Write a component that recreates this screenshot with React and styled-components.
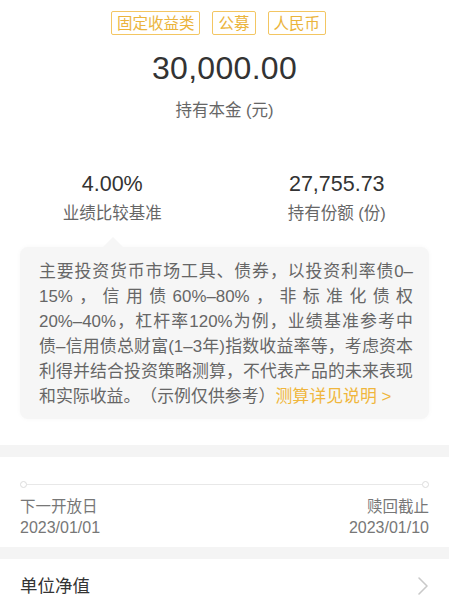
import React from "react";
import styled, { createGlobalStyle } from "styled-components";

const Global = createGlobalStyle`
  html, body { margin: 0; padding: 0; background: #fff; }
  body {
    font-family: "Liberation Sans", "Noto Sans CJK SC", sans-serif;
    -webkit-font-smoothing: antialiased;
    text-spacing-trim: space-all;
  }
`;

const Page = styled.div`
  width: 449px;
  background: #fff;
  display: flex;
  flex-direction: column;
`;

const Summary = styled.section`
  display: flex;
  flex-direction: column;
  align-items: center;
  padding-top: 11px;
`;

const TagRow = styled.div`
  display: flex;
  gap: 12px;
  padding-right: 12px;
`;

const Tag = styled.span`
  box-sizing: border-box;
  height: 24px;
  padding: 0 5px;
  border: 1.5px solid #f3c662;
  border-radius: 2px;
  color: #ebb43c;
  font-size: 15.5px;
  line-height: 21px;
  display: flex;
  align-items: center;
`;

const Amount = styled.div`
  margin-top: 13px;
  font-size: 32px;
  line-height: 40px;
  color: #333;
  letter-spacing: 0.3px;
`;

const Caption = styled.div`
  margin-top: ${(p) => p.$mt || 0}px;
  font-size: 16.5px;
  line-height: 24px;
  color: #666;
`;

const Stats = styled.div`
  margin-top: 48px;
  display: grid;
  grid-template-columns: 1fr 1fr;
`;

const Stat = styled.div`
  display: flex;
  flex-direction: column;
  align-items: center;
  gap: 3px;
`;

const StatValue = styled.div`
  font-size: 21.5px;
  line-height: 28px;
  color: #333;
`;

const BubbleWrap = styled.div`
  padding: 22px 20px 26px 20px;
`;

const Bubble = styled.div`
  position: relative;
  background: #f6f6f6;
  border-radius: 8px;
  padding: 12px 16px 10px 19px;
  box-shadow: 0 0 5px rgba(0, 0, 0, 0.03);
  &::before {
    content: "";
    position: absolute;
    top: -10px;
    left: 83px;
    border-left: 10px solid transparent;
    border-right: 10px solid transparent;
    border-bottom: 10px solid #f6f6f6;
  }
`;

const Line = styled.div`
  font-size: 16.9px;
  line-height: 25px;
  color: #666;
  text-align: justify;
  text-align-last: ${(p) => (p.$last ? "left" : "justify")};
  white-space: nowrap;
  text-spacing-trim: space-all;
`;

const Link = styled.span`
  color: #f0b63d;
`;

const Band = styled.div`
  height: 12px;
  background: #f4f4f4;
`;

const Timeline = styled.section`
  padding: 24px 20px 9px 20px;
  display: flex;
  flex-direction: column;
`;

const Track = styled.div`
  display: flex;
  align-items: center;
  height: 7px;
  margin-bottom: 9px;
`;

const Dot = styled.span`
  box-sizing: border-box;
  width: 7px;
  height: 7px;
  border-radius: 50%;
  border: 1px solid #dcdcdc;
  background: #fff;
  flex: none;
`;

const TrackLine = styled.span`
  flex: 1;
  height: 1px;
  background: #e8e8e8;
`;

const Ends = styled.div`
  display: flex;
  justify-content: space-between;
`;

const End = styled.div`
  display: flex;
  flex-direction: column;
  align-items: ${(p) => (p.$right ? "flex-end" : "flex-start")};
`;

const EndLabel = styled.div`
  font-size: 15.5px;
  line-height: 20px;
  color: #777;
`;

const EndDate = styled.div`
  font-size: 16px;
  line-height: 21px;
  color: #777;
`;

const Row = styled.div`
  height: 54px;
  padding: 0 20px;
  display: flex;
  align-items: center;
  justify-content: space-between;
`;

const RowTitle = styled.div`
  font-size: 17.5px;
  color: #333;
  margin-top: -4px;
`;

const Chevron = () => (
  <svg width="12" height="20" viewBox="0 0 12 20" fill="none">
    <path d="M2 2 L10 10 L2 18" stroke="#c9c9c9" strokeWidth="1.6" strokeLinecap="round" strokeLinejoin="round" />
  </svg>
);

export default function App() {
  return (
    <Page>
      <Global />
      <Summary>
        <TagRow>
          <Tag>固定收益类</Tag>
          <Tag>公募</Tag>
          <Tag>人民币</Tag>
        </TagRow>
        <Amount>30,000.00</Amount>
        <Caption $mt={10}>持有本金 (元)</Caption>
      </Summary>
      <Stats>
        <Stat>
          <StatValue>4.00%</StatValue>
          <Caption>业绩比较基准</Caption>
        </Stat>
        <Stat>
          <StatValue>27,755.73</StatValue>
          <Caption>持有份额 (份)</Caption>
        </Stat>
      </Stats>
      <BubbleWrap>
        <Bubble>
          <Line>主要投资货币市场工具、债券，以投资利率债0–</Line>
          <Line>15%，信用债60%–80%，非标准化债权</Line>
          <Line>20%–40%，杠杆率120%为例，业绩基准参考中</Line>
          <Line>债–信用债总财富(1–3年)指数收益率等，考虑资本</Line>
          <Line>利得并结合投资策略测算，不代表产品的未来表现</Line>
          <Line $last>
            和实际收益。（示例仅供参考）<Link>测算详见说明 &gt;</Link>
          </Line>
        </Bubble>
      </BubbleWrap>
      <Band />
      <Timeline>
        <Track>
          <Dot />
          <TrackLine />
          <Dot />
        </Track>
        <Ends>
          <End>
            <EndLabel>下一开放日</EndLabel>
            <EndDate>2023/01/01</EndDate>
          </End>
          <End $right>
            <EndLabel>赎回截止</EndLabel>
            <EndDate>2023/01/10</EndDate>
          </End>
        </Ends>
      </Timeline>
      <Band />
      <Row>
        <RowTitle>单位净值</RowTitle>
        <Chevron />
      </Row>
    </Page>
  );
}
